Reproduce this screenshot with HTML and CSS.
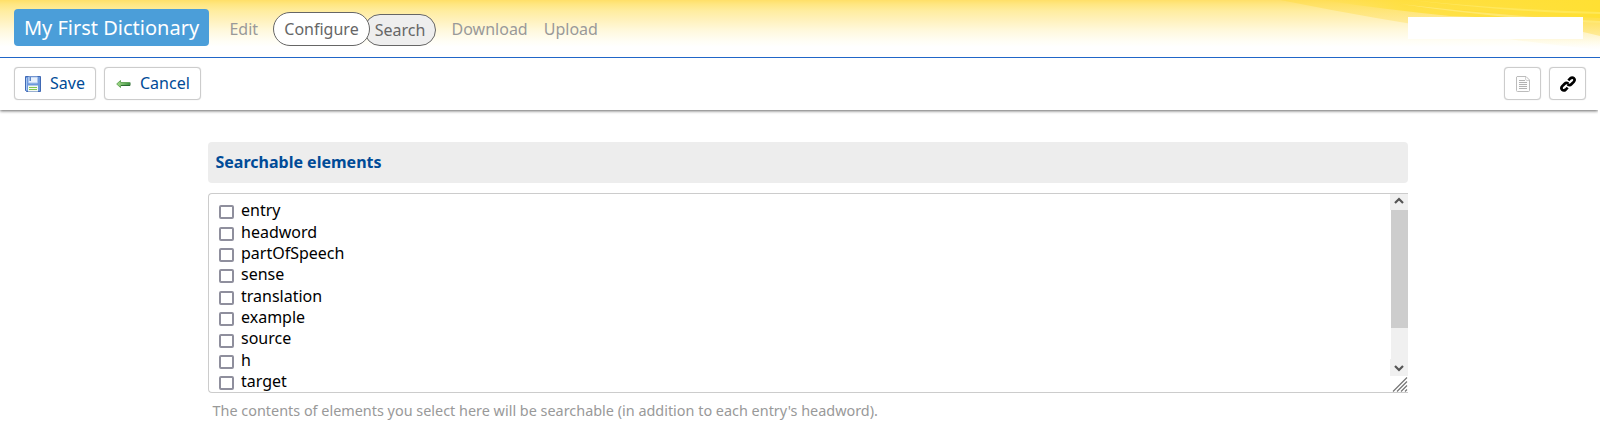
FILE: index.html
```html
<!DOCTYPE html>
<html lang="en">
<head>
<meta charset="utf-8">
<title>My First Dictionary</title>
<link rel="stylesheet" href="styles.css">
</head>
<body>
<header class="header">
  <svg class="rays" width="400" height="57" viewBox="0 0 400 57">
    <defs>
      <linearGradient id="ray" x1="0" y1="0" x2="1" y2="0"><stop offset="0" stop-color="#ffdf38" stop-opacity="0"/><stop offset=".3" stop-color="#ffdf38" stop-opacity=".75"/><stop offset="1" stop-color="#ffe033"/></linearGradient>
      <linearGradient id="soft" x1="0" y1="0" x2="0" y2="1"><stop offset="0" stop-color="#ffdd4c" stop-opacity=".65"/><stop offset=".5" stop-color="#ffe476" stop-opacity=".5"/><stop offset="1" stop-color="#fff0b8" stop-opacity="0"/></linearGradient>
      <linearGradient id="edge" x1="0" y1="0" x2="0" y2="1"><stop offset="0" stop-color="#ffdc30"/><stop offset="1" stop-color="#ffe88c"/></linearGradient>
    </defs>
    <path d="M80 0H400V50Q330 43 270 33Q180 20 80 0Z" fill="url(#soft)"/>
    <path d="M120 0H400V23L350 19Q300 18 250 16Q190 10 120 0Z" fill="url(#ray)"/>
    <path d="M250 9Q320 15 400 18V36Q380 31 350 25Q300 16 250 9Z" fill="url(#edge)" opacity=".8"/>
    <path d="M200 4Q300 16 400 21V23Q300 19 200 4Z" fill="#fff19a" opacity=".5"/>
    <path d="M210 0Q310 10 400 12V14Q320 13 210 0Z" fill="#fff07a" opacity=".5"/>
  </svg>
  <a class="title">My First Dictionary</a>
  <nav class="nav">
    <a class="edit">Edit</a>
    <a class="pill configure">Configure</a>
    <a class="pill search">Search</a>
    <a class="download">Download</a>
    <a>Upload</a>
  </nav>
  <div class="user"></div>
</header>
<div class="toolbar">
  <button class="btn save">
    <svg width="16" height="16" viewBox="0 0 16 16"><path d="M.5.5h15v15h-14l-1-1z" fill="#6d98dc" stroke="#4069b4"/><path d="M3.5 1h9v6h-9z" fill="#e9f1fc" stroke="#a9c4ec"/><path d="M4.500 1h1.500v4h-1.500z" fill="#5c86c8"/><path d="M1.500 2v12" stroke="#a8c7f2"/><path d="M3 9.500h10v6H3z" fill="#f5faf1"/><path d="M4 11.500h8M4 13.500h8" stroke="#80c653"/></svg>
    <span>Save</span>
  </button>
  <button class="btn cancel">
    <svg width="16" height="16" viewBox="0 0 16 16"><defs><linearGradient id="arrow"><stop stop-color="#a8dc8c"/><stop offset="1" stop-color="#3f9443"/></linearGradient></defs><path d="M1.700 8L5.500 4.500V6.500H14.500V9.500H5.500V11.500Z" fill="url(#arrow)" stroke="#68a85c"/><path d="M6 9.500h9V6.500" fill="none" stroke="#2c6c31"/></svg>
    <span>Cancel</span>
  </button>
  <button class="btn icon first">
    <svg width="16" height="16" viewBox="0 0 16 16"><path d="M2 .5H11L14.500 4V14.500Q14.500 15.500 13.500 15.500H2.500Q1.500 15.500 1.500 14.500V1Z" fill="#fdfdfd" stroke="#bcbcbc"/><path d="M10.500 1V3Q10.500 4.500 12 4.500H14" fill="none" stroke="#d2d2d2"/><path d="M4 4.500H10M4 6.500H12M4 8.500H12M4 10.500H12M4 12.500H12" stroke="#b2b2b2"/></svg>
  </button>
  <button class="btn icon">
    <svg width="16" height="16" viewBox="0 0 16 16" fill="none" stroke="#000" stroke-width="2.700"><path d="M7.600 8.300Q9.800 9.800 11.300 8.300L13.700 5.900Q15.400 3.900 13.900 2.300Q12.200.8 10.300 2.400L8.300 4.400"/><path d="M8.400 7.700Q6.200 6.200 4.700 7.700L2.300 10.100Q.6 12.100 2.100 13.700Q3.800 15.200 5.700 13.600L7.700 11.600"/></svg>
  </button>
</div>
<main class="content">
  <h1 class="heading">Searchable elements</h1>
  <div class="box">
    <div class="list">
      <label><i></i>entry</label>
      <label><i></i>headword</label>
      <label><i></i>partOfSpeech</label>
      <label><i></i>sense</label>
      <label><i></i>translation</label>
      <label><i></i>example</label>
      <label><i></i>source</label>
      <label><i></i>h</label>
      <label><i></i>target</label>
    </div>
    <div class="scroll">
      <div class="arrow"><svg width="18" height="17" viewBox="0 0 18 17"><path d="M5 10L9 6L13 10" fill="none" stroke="#555" stroke-width="2.200"/></svg></div>
      <div class="track"><div class="thumb"></div></div>
      <div class="arrow"><svg width="18" height="17" viewBox="0 0 18 17"><path d="M5 7L9 11L13 7" fill="none" stroke="#555" stroke-width="2.200"/></svg></div>
      <svg class="grip" width="18" height="16" viewBox="0 0 18 16"><path d="M3 15.500L17 1.500M7 15.500L17 5.500M11 15.500L17 9.500M15 15.500L17 13.500" stroke="#777" stroke-width="1.200"/></svg>
    </div>
  </div>
  <p class="hint">The contents of elements you select here will be searchable (in addition to each entry's headword).</p>
</main>
</body>
</html>
```
FILE: styles.css
```css
* { box-sizing: border-box; }
body { margin: 0; background: #fff; font: 16px "Noto Sans", sans-serif; overflow: hidden; }
.header { position: relative; display: flex; align-items: flex-start; height: 58px; padding: 9px 17px 0 14px; border-bottom: 1px solid #2166c8; background: linear-gradient(#ffdf68 0, #ffe680 4px, #ffeda0 11px, #fff2bf 21px, #fff9de 31px, #fffef5 41px, #fff 47px); }
.rays { position: absolute; right: 0; top: 0; }
.title { width: 195px; height: 37px; border-radius: 4px; background: #4b9ed9; color: #fff; font-size: 20px; line-height: 37px; text-align: center; white-space: nowrap; }
.nav { display: flex; align-items: flex-start; margin-left: 20.400px; color: #999; line-height: 41px; }
.edit { width: 43.600px; }
.pill { border: 1px solid #666; border-radius: 17px; color: #666; text-align: center; }
.configure { position: relative; z-index: 1; width: 97px; height: 34px; margin-top: 3px; background: #fff; line-height: 33px; }
.search { width: 72px; height: 32px; margin: 5px 15.600px 0 -6px; background: #eee; line-height: 31px; }
.download { margin-right: 16px; }
.user { position: relative; width: 175px; height: 22px; margin: 8px 0 0 auto; background: #fff; }
.toolbar { display: flex; align-items: flex-start; width: 1598px; height: 52px; padding: 9px 12px 0 14px; box-shadow: 0 1px 3px #666; background: #fff; clip-path: inset(0 0 -5px 0); }
.btn { display: flex; align-items: center; height: 33px; padding: 0 10px; border: 1px solid #ccc; border-radius: 4px; background: #fff; color: #004b97; font: 16px "Noto Sans", sans-serif; gap: 9px; box-shadow: 0 0 1px #ccc; }
.btn span { padding-bottom: 2px; }
.save { width: 82px; margin-right: 8px; }
.cancel { width: 97px; }
.icon { width: 37px; padding: 0; justify-content: center; margin-left: 8px; }
.first { margin-left: auto; }
.content { width: 1200px; margin: 32px auto 0 208px; }
.heading { height: 41px; margin: 0; padding-left: 7.500px; border-radius: 4px; background: #ededed; color: #004b97; font-size: 16px; font-weight: 700; line-height: 41px; }
.box { display: flex; justify-content: space-between; height: 200px; margin-top: 10px; border: 1px solid #ccc; border-right: 0; border-radius: 4px 0 0 4px; overflow: hidden; }
.list { padding: 6.150px 0 0 10px; }
.list label { display: flex; align-items: center; height: 21.400px; line-height: 21.400px; }
.list i { width: 15px; height: 14px; margin: 2.700px 7px 0 0; border: 2px solid #8f8f9d; border-radius: 2px; }
.scroll { width: 18px; margin-top: -1px; }
.arrow { height: 17px; background: #f0f0f0; }
.arrow svg, .grip { display: block; }
.track { height: 149px; margin-left: 1px; background: #f0f0f0; }
.thumb { height: 118px; background: #cdcdcd; }
.hint { margin: 8px 0 0 4.500px; color: #999; font-size: 14.410px; line-height: 20px; }
```
